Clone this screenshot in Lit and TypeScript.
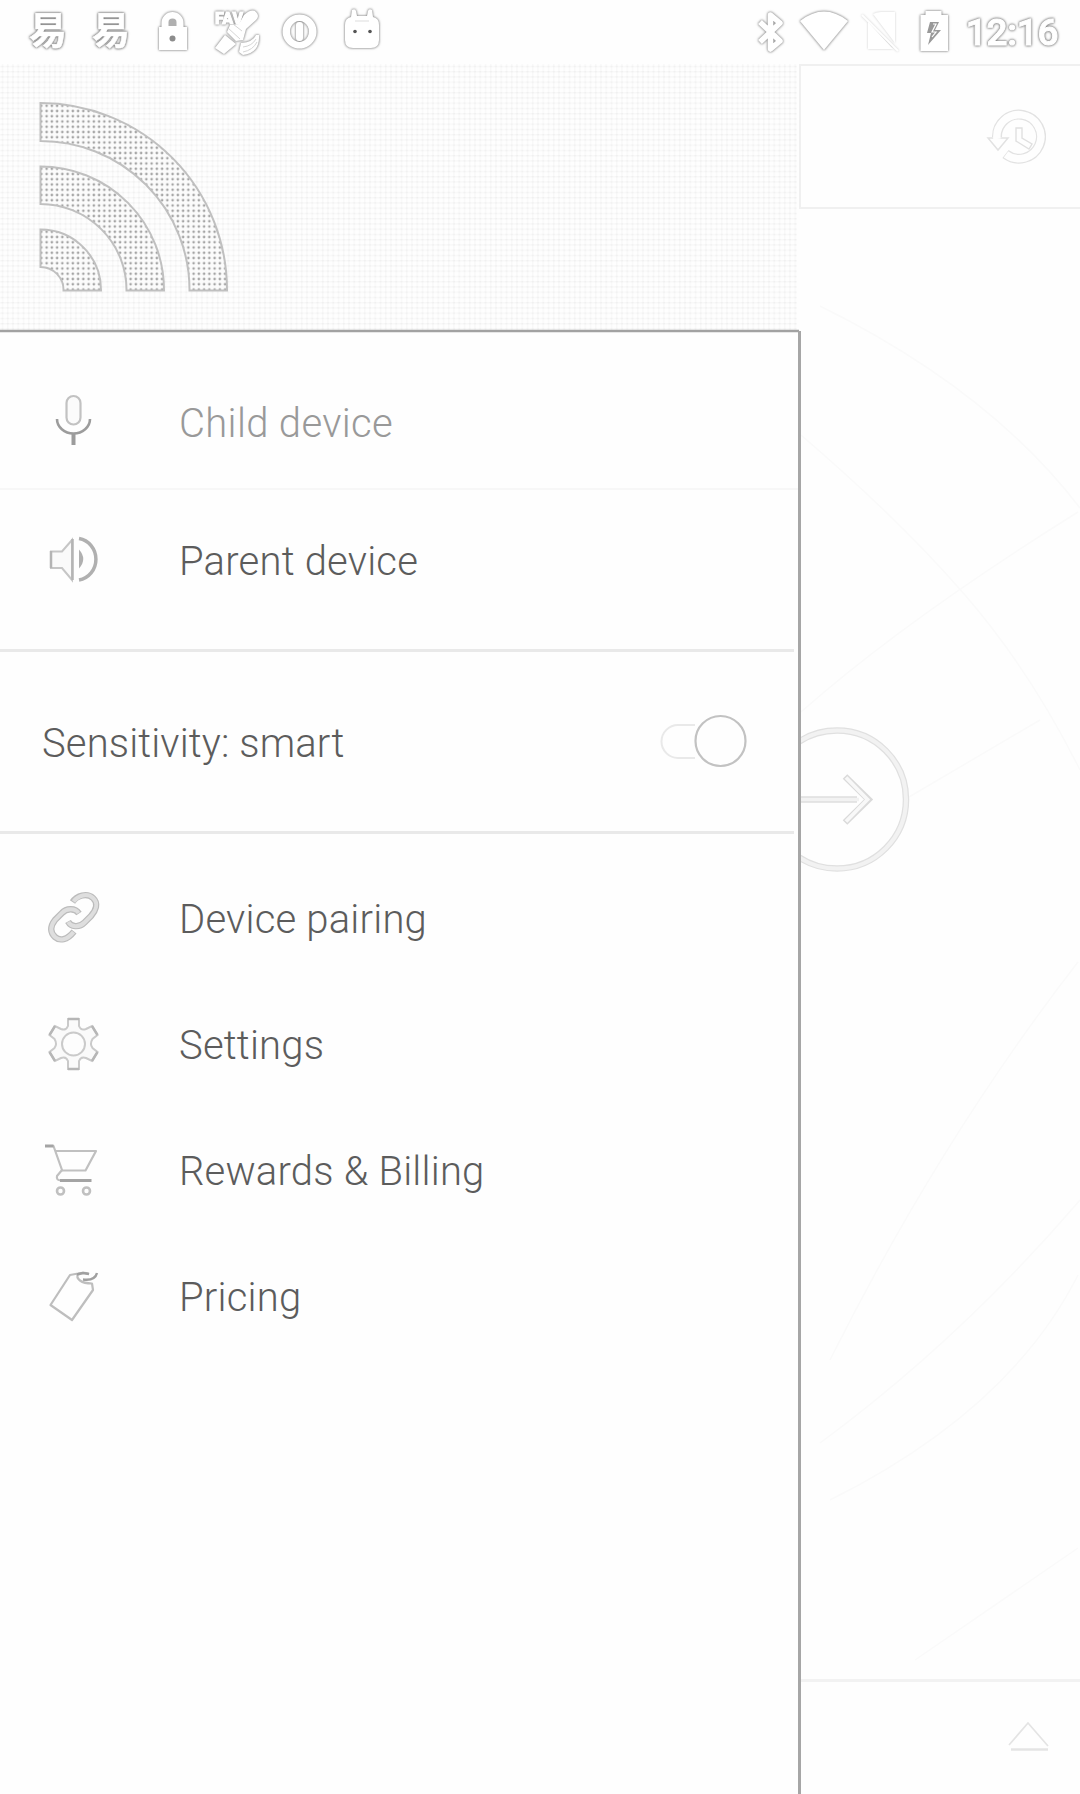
import { LitElement, html, css, svg } from "lit";
import { customElement } from "lit/decorators.js";

const ICONS: Record<string, unknown> = {
  mic: svg`<rect x="25.500" y="7" width="14" height="28.500" rx="7" fill="#fbfbfb" stroke="#c2c2c2" stroke-width="2.200"/>
    <path d="M16 30a16.500 14.500 0 0 0 33 0" fill="none" stroke="#9c9c9c" stroke-width="2.600"/>
    <path d="M32.500 45v11" stroke="#9c9c9c" stroke-width="4"/>`,
  speaker: svg`<path d="M10 24.500h11L31 13v40L21 41H10z" fill="#fafafa" stroke="#c6c6c6" stroke-width="2"/>
    <path d="M31.500 12v41M10 24v17" stroke="#b4b4b4" stroke-width="2.500"/>
    <path d="M38 11.500a20 21 0 0 1 0 41.500" fill="none" stroke="#b0b0b0" stroke-width="3.500"/>
    <path d="M38 22.500q8.500 9.500 0 19z" fill="#b0b0b0"/>`,
  link: svg`<g fill="none"><g stroke="#bcbcbc" stroke-width="6.400">
    <path d="M31.500 17C36 10.500 46 7.500 52 13S54.500 26 50 31L43.500 37.500C38 43 30 42 27 36.500"/><path d="M38 28.500C34 22.500 25 23.500 21 28l-7 7C8.500 42 9.500 48 14 52s12 3.500 19-5.500"/></g>
    <g stroke="#dedede" stroke-width="4"><path d="M32.500 16.500C37 10.500 46 7.500 52 13S54.500 26 50 31L43.500 37.500C38 43 30 42 27.300 37"/><path d="M37.500 28C34 22.500 25 23.500 21 28l-7 7C8.500 42 9.500 48 14 52s12 3.500 18.500-5"/></g></g>`,
  gear: svg`<path d="M27 8h11v7q2 5 7 3l6-3 5.500 9-5 4q-3 5 0 9l5 4-5.500 9-6-3q-5-2-7 3v8H27v-8q-2-5-7-3l-6 3-5.500-9 5-4q3-4 0-9l-5-4 5.500-9 6 3q5 2 7-3z" fill="#fafafa" stroke="#cacaca" stroke-width="2"/>
    <circle cx="32.500" cy="33" r="11.500" fill="#fdfdfd" stroke="#cacaca" stroke-width="2"/>
    <path d="M27 8h11M27 58h11M8.500 24l5.500-9M51 15l5.500 9M8.500 41l5.500 9M51 50l5.500-9" stroke="#b6b6b6" stroke-width="2.500"/>`,
  cart: svg`<g fill="none" stroke="#c0c0c0" stroke-width="2.200" stroke-linejoin="round"><path d="M4 9h8.500l8.500 24-5 6q-1 4.500 4 4.500h30"/><path d="M14 14h41L44.500 33.500H20"/><circle cx="19.500" cy="54" r="3.500" stroke-width="2.600"/><circle cx="45.500" cy="54" r="3.500" stroke-width="2.600"/></g>
    <path d="M4 9h8.500M19 43.500h31.500" stroke="#a4a4a4" stroke-width="2.800"/>`,
  tag: svg`<g fill="none" stroke="#bebebe" stroke-width="2.200" stroke-linejoin="round"><path d="M48 11q-4-2-11-.5l-8 1.500L9.500 42l21.500 15 21-30-1-6.500q-8 0-12-3-4-3-2-7"/><path d="M42 16.500q12 1.500 14-6.500" stroke="#a0a0a0" stroke-width="2.400"/><path d="M36 11.500l6-1.500 6 1" stroke="#a0a0a0" stroke-width="2.500"/></g>`,
};

@customElement("app-root")
export class AppRoot extends LitElement {
  static styles = css`
    :host { display: block; }
    * { box-sizing: border-box; }
    .screen { width: 1080px; height: 1794px; background: #fefefe; overflow: hidden; display: flex; flex-direction: column; font-family: Roboto, "Liberation Sans", sans-serif; color: #5c5c5c; }
    svg { display: block; flex: none; }
    .status { height: 64px; flex: none; display: flex; align-items: center; justify-content: space-between; padding: 0 18px 0 20px; }
    .group { display: flex; align-items: center; }
    .glow { filter: drop-shadow(0 0 1.2px #8c8c8c) drop-shadow(0 0 1px #bbb); overflow: visible; }
    .soft { filter: drop-shadow(0 0 1px #ccc); }
    .left { gap: 7px; }
    .yi { font: 700 38px/54px "Noto Sans CJK SC", sans-serif; width: 56px; height: 62px; text-align: center; color: #fff; -webkit-text-stroke: .6px #fff; filter: drop-shadow(0 0 1px #777) drop-shadow(0 0 1px #999); }
    .bluetooth { margin-right: 7px; }
    .wifi { margin-right: 5px; }
    .sim { margin-right: 10px; }
    .battery { margin-right: 8px; }
    .clock { font-size: 37px; line-height: 64px; font-weight: 500; color: #fff; width: 100px; text-align: center; letter-spacing: -0.3px; padding-top: 2px; -webkit-text-stroke: 1px #fff; filter: drop-shadow(0 0 1.2px #777) drop-shadow(0 0 1px #aaa); }
    .body { flex: 1; display: flex; min-height: 0; }
    .drawer { width: 799px; flex: none; display: flex; flex-direction: column; }
    .menu { flex: 1; padding-top: 20px; display: flex; flex-direction: column; }
    .row { height: 126px; flex: none; display: flex; align-items: center; padding-left: 41px; }
    .row svg { margin-right: 74px; }
    .tall { height: 137px; }
    .label { font-size: 40px; font-weight: 300; line-height: 48px; padding-top: 5px; white-space: nowrap; letter-spacing: .2px; }
    .tall .label { padding-top: 7px; }
    .child { border-bottom: 2px solid #f7f7f7; color: #999; }
    .child .label { letter-spacing: .33px; }
    .divider { height: 3px; flex: none; margin-right: 5px; background: #e9e9e9; }
    .above { height: 22px; flex: none; }
    .below { height: 20px; flex: none; }
    .sense { height: 179px; flex: none; display: flex; align-items: center; justify-content: space-between; padding: 0 50px 0 42px; }
    .sense .label { letter-spacing: .12px; }
    .side { flex: 1; display: flex; flex-direction: column; min-width: 0; }
    .top { height: 145px; flex: none; border: 2px solid #f0f0f0; border-right: 0; display: flex; align-items: center; justify-content: flex-end; padding: 0 34px 3px 0; }
    .canvas { height: 1470px; flex: none; display: flex; }
    .rule { width: 3px; flex: none; background: #a6a6a6; margin-left: -1px; }
    .canvas .rule { margin-top: 122px; }
    .bottom { display: flex; }
    .foot { flex: 1; height: 115px; border-top: 3px solid #f2f2f2; display: flex; align-items: center; justify-content: flex-end; padding: 0 30px 4px 0; }
  `;

  private row(icon: string, label: string, extra = "") {
    return html`<div class="row ${extra}"><svg width="64" height="64" viewBox="0 0 64 64">${ICONS[icon]}</svg><span class="label">${label}</span></div>`;
  }

  render() {
    return html`<div class="screen">
      <div class="status">
        <div class="group left">
          <span class="yi">易</span>
          <span class="yi">易</span>
          <svg class="glow" width="56" height="64" viewBox="146 0 56 64"><path d="M159 27h2.500v-4a11 11 0 0 1 22 0v4h3.500v23h-28z" fill="#fff"/><path d="M168.500 26v-4q0-3.500 4-3.500t4 3.500v4z" fill="#b0b0b0"/><circle cx="172.500" cy="38.500" r="3" fill="#8c8c8c"/></svg>
          <svg class="glow" width="56" height="64" viewBox="209 0 56 64"><g fill="#fff"><path d="M244 15q8-7 12-3 4 4 0 8l-10 9-3 11-7 1-9-9 3-7 9-1zM225 35l11 9-12 10-9-6z"/><path d="M241 43q12-1 15-8h3q1 18-16 20l-4-3z"/><text x="215" y="24" font-size="16" font-weight="900" stroke="#fff">FAV</text></g><path d="M243 47q9-1 13-8M243 52q10-2 14-10M228 28l12 11M233 24l9 7" fill="none" stroke="#d6d6d6"/></svg>
          <svg class="glow" width="56" height="64" viewBox="272 0 56 64"><path d="M299.500 14.500a17 17 0 1 0 .1 0zm0 6.500a9.500 10.500 0 1 1-.1 0z" fill="#fff" fill-rule="evenodd"/><rect x="296" y="22" width="7" height="19" rx="3" fill="#fff"/></svg>
          <svg class="glow" width="56" height="64" viewBox="335 0 56 64"><path d="M352 10q3-2 4 1l1 5h10l1-5q1-3 4-1l1 7q6 1 6 8v15q0 8-8 8h-18q-8 0-8-8V25q0-7 6-8z" fill="#fff"/><circle cx="355" cy="31.500" r="1.800" fill="#555"/><circle cx="370" cy="31.500" r="1.800" fill="#555"/><path d="M355 21h14" stroke="#ddd"/></svg>
        </div>
        <div class="group">
          <svg class="glow bluetooth" width="36" height="64" viewBox="752 0 36 64"><path d="M760 22l20 19-9.500 8V15l9.500 8-20 19" fill="none" stroke="#fff" stroke-width="5.500" stroke-linejoin="round"/></svg>
          <svg class="glow wifi" width="58" height="64" viewBox="795 0 58 64"><path d="M800 21q24-19 48 0L824 50z" fill="#fff"/></svg>
          <svg class="soft sim" width="44" height="64" viewBox="858 0 44 64"><path d="M868 22v27h25zM873 14q4-2 8-2h14v31z" fill="#fff"/><path d="M862 15l36 36" stroke="#fff" stroke-width="2"/></svg>
          <svg class="glow battery" width="42" height="64" viewBox="912 0 42 64"><path d="M920.500 15h5v-4h16v4h6.500v36h-27.500z" fill="#fff"/><path d="M930 22h9l-4 8h6l-13 15 3-12h-4z" fill="#999"/><path d="M933 24h3l-4 8h4l-4 5" fill="none" stroke="#fff" stroke-width="1.200"/></svg>
          <span class="clock">12:16</span>
        </div>
      </div>
      <div class="body">
        <div class="drawer">
          <svg width="799" height="269" viewBox="0 64 799 269">
            <defs>
              <pattern id="weave" width="5.25" height="5.25" patternUnits="userSpaceOnUse" x="0" y="64"><path d="M0 2.500h5.250M2.500 0v5.250" stroke="#f8f8f8" stroke-width="1.300"/><path d="M1.500 2.500h2" stroke="#eee"/></pattern>
              <pattern id="dots" width="5.25" height="5.25" patternUnits="userSpaceOnUse" x="44" y="108.400"><rect width="5.25" height="5.25" fill="#fbfbfb"/><circle cx="2.600" cy="2.600" r="1.300" fill="#a4a4a4"/></pattern>
            </defs>
            <rect y="64" width="797" height="266" fill="url(#weave)"/>
            <g fill="url(#dots)" stroke="#c0c0c0" stroke-width="2">
              <path d="M40.500 103A187 187 0 0 1 227 290.500H189.500A149 149 0 0 0 40.500 141z"/>
              <path d="M40.500 166.500A123.500 123.500 0 0 1 164 290.500H126.500A86 86 0 0 0 40.500 204z"/>
              <path d="M40.500 229.500A60.500 60.500 0 0 1 101 290.500H63.500A23 23 0 0 0 40.500 267z"/>
            </g>
            <path d="M0 331h799" stroke="#a2a2a2" stroke-width="2.400"/>
          </svg>
          <div class="menu">
            ${this.row("mic", "Child device", "tall child")}
            ${this.row("speaker", "Parent device", "tall")}
            <div class="above"></div>
            <div class="divider"></div>
            <div class="sense">
              <span class="label">Sensitivity: smart</span>
              <svg width="90" height="64" viewBox="659 710 90 64"><path d="M695 725h-17a16.500 16.500 0 0 0 0 33h17" fill="none" stroke="#e9e9e9" stroke-width="2"/><circle cx="720.500" cy="741" r="25" fill="#fefefe" stroke="#c2c2c2" stroke-width="2.200"/></svg>
            </div>
            <div class="divider"></div>
            <div class="below"></div>
            ${this.row("link", "Device pairing")}
            ${this.row("gear", "Settings")}
            ${this.row("cart", "Rewards & Billing")}
            ${this.row("tag", "Pricing")}
          </div>
        </div>
        <div class="side">
          <div class="top"><svg width="60" height="64" viewBox="986 104 60 64" fill="none"><path d="M997 138a22 22 0 1 1 8.500 17" stroke="#e2e2e2" stroke-width="10"/><path d="M988 139h20l-10 12z" fill="#fefefe" stroke="#e2e2e2" stroke-width="1.500"/><path d="M997 140a22 22 0 1 1 9 15.500" stroke="#fefefe" stroke-width="7.500"/><path d="M1016 129h6v10l10 6-3 5-13-8z" stroke="#e0e0e0" stroke-width="1.400"/></svg></div>
          <div class="canvas">
            <div class="rule"></div>
            <svg width="279" height="1470" viewBox="801 209 279 1470" fill="none">
              <path d="M820 306Q990 390 1080 508M801 435Q900 520 965 595T1080 770M801 712Q905 620 1078 512M909 797L1040 720M830 1360Q940 1140 1078 962M820 1443Q960 1340 1080 1200M830 1500Q1010 1410 1078 1275M915 1660L1078 1548" stroke="#fafafa" stroke-width="1.500"/>
              <circle cx="837" cy="799.500" r="69" stroke="#e0e0e0" stroke-width="6.500"/><circle cx="837" cy="799.500" r="69" stroke="#f2f2f2" stroke-width="4"/>
              <path d="M799 799.500h58" stroke="#dedede" stroke-width="6.500"/><path d="M799 799.500h60" stroke="#f2f2f2" stroke-width="3.500"/>
              <path d="M845 776.500l23.500 23L845 822.500" stroke="#dadada" stroke-width="6.500"/><path d="M846 777.500l21.500 22L846 821.500" stroke="#f8f8f8" stroke-width="3.800"/>
            </svg>
          </div>
          <div class="bottom"><div class="rule"></div><div class="foot"><svg width="44" height="40" viewBox="1006 1716 44 40"><path d="M1009 1745l19-22 20 23" fill="none" stroke="#e4e4e4" stroke-width="1.700"/><path d="M1011 1749.500h37" stroke="#e4e4e4" stroke-width="2.500"/></svg></div></div>
        </div>
      </div>
    </div>`;
  }
}
